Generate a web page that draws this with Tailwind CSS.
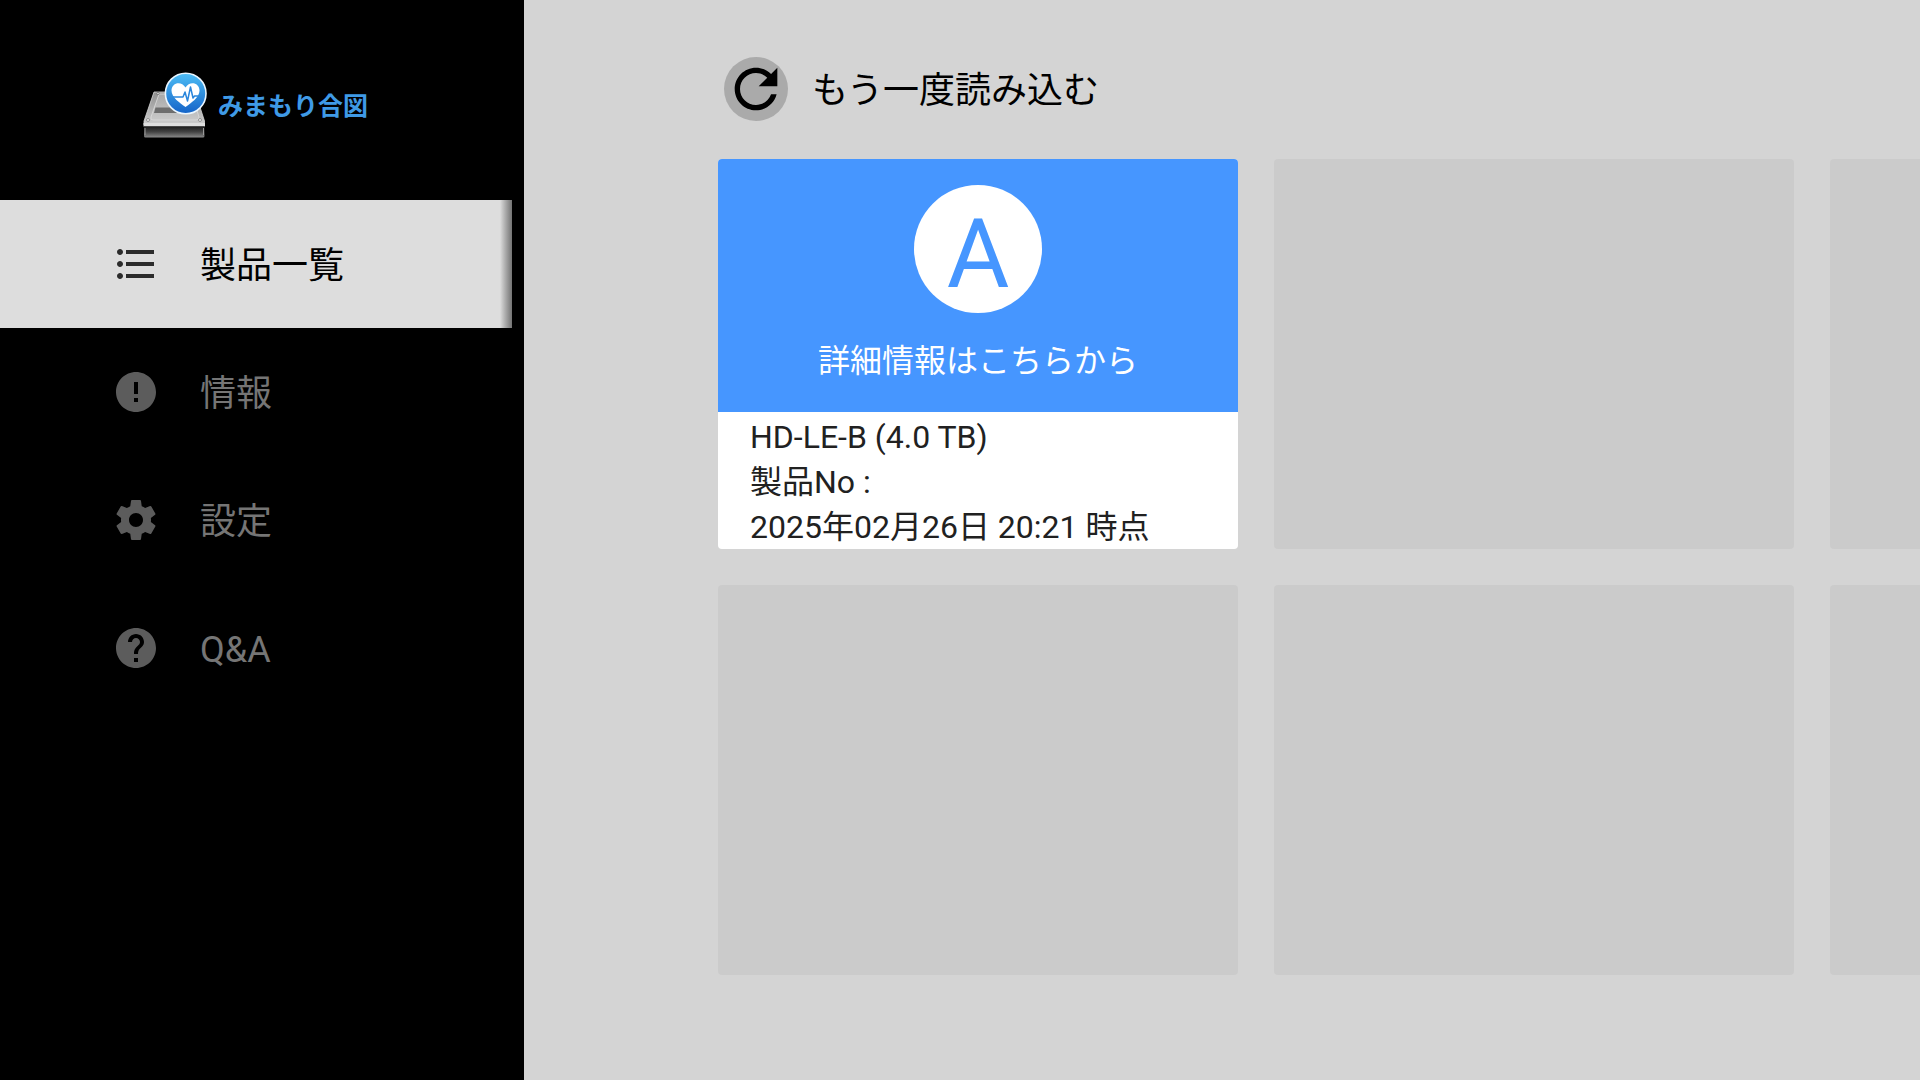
<!DOCTYPE html>
<html lang="ja">
  <head>
    <meta charset="UTF-8" />
    <meta name="viewport" content="width=device-width, initial-scale=1.0" />
    <script src="https://cdn.jsdelivr.net/npm/@tailwindcss/browser@4"></script>
    <title>みまもり合図</title>
  </head>
  <body class="select-none font-[Roboto,'Noto_Sans_CJK_JP',sans-serif]">
    <div class="flex min-h-screen w-full overflow-hidden bg-[#d4d4d4]">
      <!-- sidebar -->
      <aside class="w-[524px] shrink-0 bg-black pr-3">
        <div class="flex h-[200px] items-center gap-2 pt-2 pl-[142px]">
          <svg class="h-[68px] w-[68px] shrink-0" viewBox="0 0 68 68" aria-hidden="true">
            <defs>
              <linearGradient id="top" x1="0" y1="0" x2="0" y2="1">
                <stop offset="0" stop-color="#8f8f8f" />
                <stop offset="1" stop-color="#cfcfcf" />
              </linearGradient>
              <linearGradient id="plate" x1="0" y1="0" x2="0" y2="1">
                <stop offset="0" stop-color="#a8a8a8" />
                <stop offset="1" stop-color="#c9c9c9" />
              </linearGradient>
              <linearGradient id="front" x1="0" y1="0" x2="0" y2="1">
                <stop offset="0" stop-color="#1c1c1c" />
                <stop offset="0.5" stop-color="#454545" />
                <stop offset="1" stop-color="#8a8a8a" />
              </linearGradient>
              <linearGradient id="badge" x1="0" y1="0" x2="0" y2="1">
                <stop offset="0" stop-color="#4dbdf5" />
                <stop offset="1" stop-color="#1463c8" />
              </linearGradient>
            </defs>
            <path d="M12 22H53L62.500 51V55H2V51Z" fill="url(#top)" stroke="#d8d8d8" stroke-width="0.800" />
            <path d="M17 24H50L57 47Q57 50 54 50H11Q8 50 9 47Z" fill="url(#plate)" stroke="#dcdcdc" stroke-width="0.800" />
            <path d="M13.500 37.500H40V43H12Z" fill="#6e6e6e" />
            <circle cx="16" cy="23.500" r="1.200" fill="#ddd" stroke="#555" stroke-width="0.600" />
            <circle cx="6" cy="50" r="1.500" fill="#eee" stroke="#777" stroke-width="0.700" />
            <circle cx="58" cy="50" r="1.500" fill="#eee" stroke="#777" stroke-width="0.700" />
            <path d="M1.500 53H63V56.500H1.500Z" fill="#dedede" />
            <path d="M2 56.500H62.500V66Q62.500 67.500 61 67.500H3.500Q2 67.500 2 66Z" fill="url(#front)" />
            <path d="M3 58V65M61.500 58V65" stroke="#999" stroke-width="1" />
            <circle cx="43.700" cy="23.500" r="20.300" fill="url(#badge)" stroke="#eaf6ff" stroke-width="1.600" />
            <path d="M43.500 37C38 33 29.500 27.500 29.500 20.500C29.500 12.500 39.500 10.500 43.500 17.500C47.500 10.500 57.500 12.500 57.500 20.500C57.500 27.500 49 33 43.500 37Z" fill="#fff" />
            <path d="M31 27H41L43 22L45.500 31L48.500 17L51 28L52.500 26H56.500" fill="none" stroke="#2a86dc" stroke-width="1.500" stroke-linejoin="round" />
          </svg>
          <p class="pt-1.5 text-[25px] leading-8 font-bold text-[#3f9ae6]">みまもり合図</p>
        </div>

        <nav class="text-4xl text-[#757575]">
          <a href="#list" aria-current="page" class="relative flex h-32 items-center gap-10 bg-[#ddd] pl-28 text-black">
            <svg class="h-12 w-12" viewBox="0 0 24 24" fill="#2b2b2b" aria-hidden="true">
              <path d="M4 10.500c-.83 0-1.500.67-1.500 1.500s.67 1.500 1.500 1.500 1.500-.67 1.500-1.500-.67-1.500-1.500-1.500zm0-6c-.83 0-1.500.67-1.500 1.500S3.170 7.500 4 7.500 5.500 6.830 5.500 6 4.830 4.500 4 4.500zm0 12c-.83 0-1.500.68-1.500 1.500s.68 1.500 1.500 1.500 1.500-.68 1.500-1.500-.67-1.500-1.500-1.500zM7 19h14v-2H7v2zm0-6h14v-2H7v2zm0-8v2h14V5H7z" />
            </svg>
            <span class="pt-1">製品一覧</span>
            <span class="absolute inset-y-0 right-0 w-3 bg-linear-to-r from-[#ddd] to-[#737373]"></span>
          </a>
          <a href="#info" class="flex h-32 items-center gap-10 pl-28">
            <svg class="h-12 w-12" viewBox="0 0 24 24" fill="#5c5c5c" aria-hidden="true">
              <path d="M12 2C6.480 2 2 6.480 2 12s4.480 10 10 10 10-4.480 10-10S17.520 2 12 2zm1 15h-2v-2h2v2zm0-4h-2V7h2v6z" />
            </svg>
            <span class="pt-1">情報</span>
          </a>
          <a href="#settings" class="flex h-32 items-center gap-10 pl-28">
            <svg class="h-12 w-12" viewBox="0 0 24 24" fill="#5c5c5c" aria-hidden="true">
              <path d="M19.430 12.980c.04-.32.07-.64.07-.98s-.03-.66-.07-.98l2.110-1.650c.19-.15.24-.42.12-.64l-2-3.460c-.12-.22-.39-.3-.61-.22l-2.490 1c-.52-.4-1.080-.73-1.690-.98l-.38-2.650C14.460 2.180 14.250 2 14 2h-4c-.25 0-.46.18-.49.42l-.38 2.650c-.61.25-1.170.59-1.690.98l-2.490-1c-.23-.09-.49 0-.61.22l-2 3.460c-.13.22-.07.49.12.64l2.110 1.650c-.04.32-.07.65-.07.98s.03.66.07.98l-2.110 1.650c-.19.15-.24.42-.12.64l2 3.460c.12.22.39.3.61.22l2.490-1c.52.4 1.080.73 1.690.98l.38 2.650c.03.24.24.42.49.42h4c.25 0 .46-.18.49-.42l.38-2.650c.61-.25 1.170-.59 1.690-.98l2.490 1c.23.09.49 0 .61-.22l2-3.460c.12-.22.07-.49-.12-.64l-2.110-1.650zM12 15.500c-1.930 0-3.500-1.570-3.500-3.500s1.570-3.500 3.500-3.500 3.500 1.570 3.500 3.500-1.570 3.500-3.500 3.500z" />
            </svg>
            <span class="pt-1">設定</span>
          </a>
          <a href="#qa" class="flex h-32 items-center gap-10 pl-28">
            <svg class="h-12 w-12" viewBox="0 0 24 24" fill="#5c5c5c" aria-hidden="true">
              <path d="M12 2C6.480 2 2 6.480 2 12s4.480 10 10 10 10-4.480 10-10S17.520 2 12 2zm1 17h-2v-2h2v2zm2.070-7.750l-.9.920C13.450 12.900 13 13.500 13 15h-2v-.5c0-1.100.45-2.100 1.170-2.830l1.240-1.260c.37-.36.59-.86.59-1.410 0-1.100-.9-2-2-2s-2 .9-2 2H8c0-2.210 1.790-4 4-4s4 1.790 4 4c0 .88-.36 1.680-.93 2.250z" />
            </svg>
            <span class="pt-1">Q&amp;A</span>
          </a>
        </nav>
      </aside>

      <!-- product list -->
      <main class="min-w-0 flex-1 overflow-hidden pt-[57px] pl-[194px]">
        <button type="button" class="flex h-16 items-center gap-6 pl-1.5 text-4xl text-black">
          <span class="flex h-16 w-16 items-center justify-center rounded-full bg-[#aaa]">
            <svg class="h-16 w-16" viewBox="0 0 24 24" aria-hidden="true">
              <path d="M17.650 6.350C16.200 4.900 14.210 4 12 4c-4.420 0-7.990 3.580-7.990 8s3.570 8 7.990 8c3.730 0 6.840-2.550 7.730-6h-2.080c-.82 2.330-3.040 4-5.650 4-3.310 0-6-2.690-6-6s2.690-6 6-6c1.660 0 3.140.69 4.220 1.780L13 11h7V4l-2.350 2.350z" />
            </svg>
          </span>
          <span class="pt-1">もう一度読み込む</span>
        </button>

        <div class="mt-[38px] grid grid-cols-[repeat(3,520px)] auto-rows-[390px] gap-9">
          <a href="#detail" class="flex flex-col overflow-hidden rounded-sm bg-white">
            <div class="flex h-[253px] shrink-0 flex-col items-center bg-[#4696ff] pt-[26px] text-white">
              <span class="flex h-32 w-32 items-center justify-center rounded-full bg-white pt-2.5 text-8xl text-[#4696ff]">A</span>
              <p class="mt-6 text-[32px] leading-12">詳細情報はこちらから</p>
            </div>
            <div class="px-8 pt-[3px] text-[32px] leading-[45px] text-[#212121]">
              <p>HD-LE-B (4.0 TB)</p>
              <p>製品No :</p>
              <p>2025年02月26日 20:21 時点</p>
            </div>
          </a>
          <div class="rounded-sm bg-[#cbcbcb]"></div>
          <div class="rounded-sm bg-[#cbcbcb]"></div>
          <div class="rounded-sm bg-[#cbcbcb]"></div>
          <div class="rounded-sm bg-[#cbcbcb]"></div>
          <div class="rounded-sm bg-[#cbcbcb]"></div>
        </div>
      </main>
    </div>
  </body>
</html>
